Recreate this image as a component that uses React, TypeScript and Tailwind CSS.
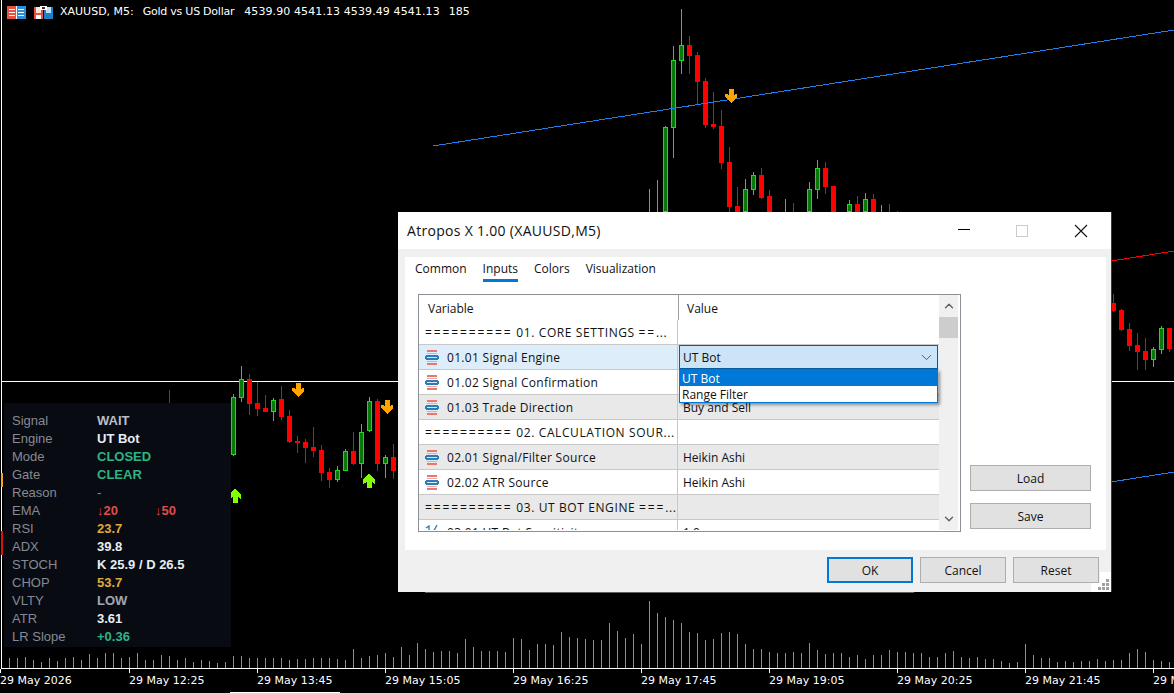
import { ChevronDown, ChevronUp } from 'lucide-react';

const sans = 'font-["Open_Sans",sans-serif]';

// [x, wickTop, wickBottom, bodyTop, bodyBottom, up]
type Candle = [number, number, number, number, number, boolean];

const candles: Candle[] = [
  [233, 394, 456, 397, 455, true],
  [241, 366, 402, 379, 398, true],
  [249, 374, 415, 379, 404, false],
  [257, 382, 416, 403, 409, false],
  [265, 395, 412, 408, 412, false],
  [273, 398, 421, 400, 412, true],
  [281, 386, 420, 399, 417, false],
  [289, 410, 443, 416, 442, false],
  [297, 436, 453, 441, 443, false],
  [305, 439, 463, 442, 448, false],
  [313, 427, 457, 447, 451, false],
  [321, 445, 481, 450, 473, false],
  [329, 468, 488, 472, 480, false],
  [337, 466, 482, 470, 480, true],
  [345, 449, 471, 451, 471, true],
  [353, 432, 465, 451, 464, false],
  [361, 424, 478, 432, 464, true],
  [369, 397, 432, 401, 431, true],
  [377, 399, 471, 401, 464, false],
  [385, 455, 478, 457, 464, true],
  [393, 444, 479, 457, 471, false],
  [665, 126, 212, 127, 212, true],
  [673, 46, 158, 60, 128, true],
  [681, 9, 74, 45, 61, true],
  [689, 36, 74, 45, 56, false],
  [697, 52, 104, 55, 82, false],
  [705, 78, 128, 81, 125, false],
  [713, 92, 129, 124, 127, false],
  [721, 110, 169, 126, 163, false],
  [729, 147, 212, 162, 207, false],
  [737, 187, 212, 206, 212, false],
  [745, 179, 212, 189, 212, true],
  [753, 172, 195, 175, 190, true],
  [761, 168, 199, 175, 198, false],
  [769, 190, 212, 196, 212, false],
  [809, 182, 212, 189, 212, true],
  [817, 160, 199, 168, 190, true],
  [825, 162, 194, 168, 187, false],
  [833, 186, 212, 186, 212, false],
  [849, 200, 212, 204, 212, true],
  [857, 196, 212, 204, 212, false],
  [865, 193, 212, 199, 212, true],
  [873, 194, 212, 199, 212, false],
  [1113, 294, 312, 303, 311, false],
  [1121, 309, 331, 310, 330, false],
  [1129, 323, 351, 329, 346, false],
  [1137, 333, 370, 345, 352, false],
  [1145, 338, 370, 351, 360, false],
  [1153, 347, 367, 349, 360, true],
  [1161, 326, 354, 328, 350, true],
  [1169, 328, 352, 328, 349, false],
];

// lone wicks poking out above the dialog or the panel
const wicks: [number, number, number, string][] = [
  [649, 189, 212, '#14e014'],
  [657, 180, 212, '#14e014'],
  [785, 199, 212, '#14e014'],
  [793, 203, 212, '#ff0000'],
  [881, 205, 212, '#14e014'],
  [889, 204, 212, '#ff0000'],
  [897, 211, 212, '#ff0000'],
  [169, 390, 403, '#ff0000'],
];

const volumes = [
  10, 10, 11, 8, 6, 10, 7, 10, 11, 8, 14, 10, 15, 15, 10, 11, 15, 8, 8, 13, 12, 8, 10, 6, 8, 7, 5, 6, 12, 12, 10, 10, 10,
  10, 10, 8, 9, 9, 10, 10, 10, 9, 8, 19, 10, 12, 13, 15, 11, 21, 13, 25, 19, 16, 17, 17, 15, 29, 21, 17, 17, 17, 16, 30,
  29, 18, 24, 24, 23, 36, 31, 30, 29, 28, 28, 45, 37, 30, 34, 24, 67, 55, 51, 48, 45, 36, 35, 28, 29, 35, 36, 34, 24, 19,
  19, 16, 15, 15, 16, 15, 25, 18, 14, 15, 15, 11, 13, 9, 13, 13, 18, 16, 16, 15, 15, 11, 11, 15, 17, 11, 10, 11, 9, 9, 7,
  5, 6, 24, 13, 10, 10, 6, 7, 6, 7, 7, 9, 7, 8, 8, 15, 19, 16, 8, 7, 6,
];

const timeLabels = [
  '29 May 2026',
  '29 May 12:25',
  '29 May 13:45',
  '29 May 15:05',
  '29 May 16:25',
  '29 May 17:45',
  '29 May 19:05',
  '29 May 20:25',
  '29 May 21:45',
  '29 May 23:05',
];

function DownArrow({ x, y }: { x: number; y: number }) {
  return (
    <polygon
      transform={`translate(${x} ${y})`}
      points="-2.5,0 2.5,0 2.5,6 5.5,4.5 6,8 0,14 -6,8 -5.5,4.5 -2.5,6"
      fill="#ffa500"
    />
  );
}

function UpArrow({ x, y }: { x: number; y: number }) {
  return (
    <polygon
      transform={`translate(${x} ${y})`}
      points="-2.5,15 2.5,15 2.5,9 5.5,10.5 6,7 0,0 -6,7 -5.5,10.5 -2.5,9"
      fill="#7fff00"
    />
  );
}

function ChartDrawing() {
  return (
    <svg className="absolute inset-0" width={1174} height={669} shapeRendering="crispEdges">
      <rect x={1} y={0} width={1} height={669} fill="#ffffff" />
      <rect x={1} y={473} width={2} height={14} fill="#f5a623" />
      <rect x={1} y={531} width={2} height={24} fill="#e01010" />
      <rect x={2} y={381} width={1172} height={1} fill="#ffffff" />
      <rect x={1} y={668} width={1173} height={1} fill="#ffffff" />
      {volumes.map((h, i) => (
        <rect key={i} x={9 + i * 8} y={668 - h} width={1} height={h} fill="#32cd32" />
      ))}
      {wicks.map(([x, a, b, c]) => (
        <rect key={x} x={x} y={a} width={1} height={b - a} fill={c} />
      ))}
      {candles.map(([x, wt, wb, bt, bb, up]) => (
        <g key={x}>
          <rect x={x} y={wt} width={1} height={wb - wt} fill={up ? '#14e014' : '#ff0000'} />
          {up ? (
            <rect x={x - 1.5} y={bt + 0.5} width={4} height={bb - bt - 1} fill="#067a06" stroke="#14e014" />
          ) : (
            <rect x={x - 2} y={bt} width={5} height={bb - bt} fill="#ff0000" />
          )}
        </g>
      ))}
      <line x1={433} y1={146} x2={1174} y2={30} stroke="#1e80f0" />
      <line x1={1111} y1={261} x2={1174} y2={251} stroke="#ff0000" />
      <line x1={1111} y1={482} x2={1174} y2={472} stroke="#1e80f0" />
      <DownArrow x={298} y={383} />
      <DownArrow x={387} y={400} />
      <DownArrow x={731} y={89} />
      <UpArrow x={369} y={473} />
      <UpArrow x={235} y={488} />
    </svg>
  );
}

function ChartHeader() {
  return (
    <div className='absolute left-[7px] top-[4px] flex items-center font-["DejaVu_Sans",sans-serif] text-[11px] whitespace-pre text-white'>
      <svg width={19} height={13} viewBox="0 0 19 13" shapeRendering="crispEdges">
        <rect width={19} height={13} fill="#ffffff" />
        <rect x={0} y={0} width={9} height={13} fill="#e8503f" />
        <rect x={10} y={0} width={9} height={13} fill="#2c8fd8" />
        <rect x={2} y={3} width={6} height={1} fill="#ffffff" />
        <rect x={2} y={6} width={6} height={1} fill="#ffffff" />
        <rect x={2} y={9} width={6} height={1} fill="#ffffff" />
        <rect x={11} y={3} width={6} height={1} fill="#ffffff" />
        <rect x={11} y={6} width={6} height={1} fill="#ffffff" />
        <rect x={11} y={9} width={6} height={1} fill="#ffffff" />
      </svg>
      <svg className="ml-[8px]" width={19} height={13} viewBox="0 0 19 13" shapeRendering="crispEdges">
        <rect x={0} y={1} width={9} height={12} fill="#e8503f" />
        <rect x={2} y={1} width={5} height={6} fill="#fbe3df" />
        <rect x={10} y={1} width={9} height={12} fill="#1f7fc8" />
        <rect x={12} y={1} width={5} height={6} fill="#bfe0f7" />
        <rect x={6} y={0} width={7} height={4} fill="#ffffff" />
        <rect x={8} y={1} width={3} height={2} fill="#333333" />
        <rect x={2} y={9} width={5} height={4} fill="#ffffff" />
      </svg>
      <span className="ml-[7px]">XAUUSD, M5:</span>
      <span className="ml-[9px] tracking-[-0.25px]">Gold vs US Dollar</span>
      <span className="ml-[10px] tracking-[0.1px]">4539.90 4541.13 4539.49 4541.13</span>
      <span className="ml-[9px]">185</span>
    </div>
  );
}

const panelRows = [
  { label: 'Signal', value: 'WAIT', color: 'text-[#b9bdc7]' },
  { label: 'Engine', value: 'UT Bot', color: 'text-[#e8edf4]' },
  { label: 'Mode', value: 'CLOSED', color: 'text-[#2eb384]' },
  { label: 'Gate', value: 'CLEAR', color: 'text-[#2eb384]' },
  { label: 'Reason', value: '-', color: 'text-[#8b8f99] font-normal' },
  { label: 'EMA', value: '', color: '' },
  { label: 'RSI', value: '23.7', color: 'text-[#e0a93b]' },
  { label: 'ADX', value: '39.8', color: 'text-[#e8edf4]' },
  { label: 'STOCH', value: 'K 25.9 / D 26.5', color: 'text-[#e8edf4]' },
  { label: 'CHOP', value: '53.7', color: 'text-[#e0a93b]' },
  { label: 'VLTY', value: 'LOW', color: 'text-[#a3a7b1]' },
  { label: 'ATR', value: '3.61', color: 'text-[#e8edf4]' },
  { label: 'LR Slope', value: '+0.36', color: 'text-[#2eb384]' },
];

function SignalPanel() {
  return (
    <div className='absolute left-[4px] top-[403px] h-[244px] w-[227px] bg-[#080b12] pl-[8px] pt-[9px] font-["Liberation_Sans",sans-serif] text-[13px] leading-[18px]'>
      {panelRows.map((row) => (
        <div key={row.label} className="flex h-[18px]">
          <span className="w-[85px] text-[#868a94]">{row.label}</span>
          {row.label === 'EMA' ? (
            <span className="flex font-bold text-[#e04b4b]">
              <span className="w-[58px]">↓20</span>
              <span>↓50</span>
            </span>
          ) : (
            <span className={`font-bold ${row.color}`}>{row.value}</span>
          )}
        </div>
      ))}
    </div>
  );
}

function ParamIcon() {
  return (
    <svg className="shrink-0" width={15} height={15} viewBox="0 0 15 15" shapeRendering="crispEdges">
      <rect x={2} y={0} width={10} height={2} fill="#e9766f" />
      <rect x={2} y={3} width={10} height={1} fill="#f0a8a3" />
      <rect x={1} y={5} width={12} height={5} fill="#2b7cb8" />
      <rect x={0} y={6} width={14} height={3} fill="#2b7cb8" />
      <rect x={2} y={7} width={10} height={1} fill="#d5e6f3" />
      <rect x={2} y={11} width={10} height={1} fill="#f0a8a3" />
      <rect x={2} y={13} width={10} height={2} fill="#e9766f" />
    </svg>
  );
}

function FractionIcon() {
  return (
    <svg className="shrink-0" width={15} height={15} viewBox="0 0 15 15">
      <path d="M1 3 L4 1 V9 M12 0 L5 13" fill="none" stroke="#2b7cb8" strokeWidth={1.3} />
    </svg>
  );
}

type Row = { kind: 'sep' | 'param' | 'num'; name: string; value: string; bg: string };

const rows: Row[] = [
  { kind: 'sep', name: '========== 01. CORE SETTINGS ==...', value: '', bg: 'bg-white' },
  { kind: 'param', name: '01.01 Signal Engine', value: '', bg: 'bg-[#deedfa]' },
  { kind: 'param', name: '01.02 Signal Confirmation', value: '', bg: 'bg-white' },
  { kind: 'param', name: '01.03 Trade Direction', value: 'Buy and Sell', bg: 'bg-[#e9e9e9]' },
  { kind: 'sep', name: '========== 02. CALCULATION SOUR...', value: '', bg: 'bg-white' },
  { kind: 'param', name: '02.01 Signal/Filter Source', value: 'Heikin Ashi', bg: 'bg-[#e9e9e9]' },
  { kind: 'param', name: '02.02 ATR Source', value: 'Heikin Ashi', bg: 'bg-white' },
  { kind: 'sep', name: '========== 03. UT BOT ENGINE ===...', value: '', bg: 'bg-[#e9e9e9]' },
  { kind: 'num', name: '03.01 UT Bot Sensitivity', value: '1.0', bg: 'bg-white' },
];

// the "=" runs sit wider in the reference than in this font
function SeparatorName({ name }: { name: string }) {
  return (
    <span className="whitespace-pre pt-[2px] tracking-[0.6px]">
      {name.split(/(=+)/).map((part, i) => (
        <span key={i} className={part.startsWith('=') ? 'tracking-[1.9px]' : ''}>
          {part}
        </span>
      ))}
    </span>
  );
}

function TableRow({ row }: { row: Row }) {
  return (
    <div className={`flex h-[25px] shrink-0 border-b border-[#c8c8c8] ${row.bg}`}>
      <div className="flex w-[259px] items-center border-r border-[#c8c8c8] pl-[6px]">
        {row.kind === 'param' && <ParamIcon />}
        {row.kind === 'num' && <FractionIcon />}
        {row.kind === 'sep' ? (
          <SeparatorName name={row.name} />
        ) : (
          <span className="ml-[7px] pt-[2px] tracking-[0.3px]">{row.name}</span>
        )}
      </div>
      <div className="flex-1 pl-[5px] leading-[26px]">{row.value}</div>
    </div>
  );
}

function ValueCombo() {
  return (
    <div className="absolute left-[260px] top-[50px] z-10 w-[259px]">
      <div className="flex h-[24px] items-center justify-between border border-[#0b5c9e] bg-[#cce4f7] pl-[3px] pr-[2px]">
        <span className="pt-[2px]">UT Bot</span>
        <ChevronDown size={17} strokeWidth={1.1} className="text-[#333333]" />
      </div>
      <div className="border border-t-0 border-[#0078d7] bg-white shadow-[2px_2px_3px_rgba(0,0,0,0.4)]">
        <div className="h-[17px] bg-[#0078d7] pl-[2px] leading-[20px] text-white">UT Bot</div>
        <div className="h-[16px] pl-[2px] leading-[17px]">Range Filter</div>
      </div>
    </div>
  );
}

function InputsTable() {
  return (
    <div className="relative flex h-[238px] w-[543px] border border-[#8a9096] bg-white">
      <div className="w-[520px] overflow-hidden">
        <div className="flex h-[25px] leading-[27px]">
          <div className="flex h-[25px] w-[260px] border-r border-[#a0a0a0] pl-[9px]">Variable</div>
          <div className="pl-[8px]">Value</div>
        </div>
        <div className="flex h-[210px] flex-col overflow-hidden">
          {rows.map((row) => (
            <TableRow key={row.name} row={row} />
          ))}
        </div>
      </div>
      <div className="mb-[1px] flex w-[19px] flex-col items-center bg-[#f0f0f0]">
        <div className="flex h-[22px] items-center">
          <ChevronUp size={14} strokeWidth={2.4} className="text-[#606060]" />
        </div>
        <div className="h-[21px] w-full bg-[#cdcdcd]" />
        <div className="mt-auto flex h-[22px] items-center">
          <ChevronDown size={14} strokeWidth={2.4} className="text-[#606060]" />
        </div>
      </div>
      <ValueCombo />
    </div>
  );
}

function WinButton({ label, primary, wide }: { label: string; primary?: boolean; wide?: boolean }) {
  return (
    <div
      className={`flex items-center justify-center bg-[#e1e1e1] ${
        primary ? 'border-2 border-[#0078d7]' : 'border border-[#adadad]'
      } ${wide ? 'h-[26px] w-[121px]' : 'h-[26px] w-[86px]'}`}
    >
      <span className="pt-[2px]">{label}</span>
    </div>
  );
}

function SettingsDialog() {
  return (
    <div className={`absolute left-[398px] top-[212px] flex h-[380px] w-[713px] flex-col bg-[#f0f0f0] text-xs text-[#111111] ${sans}`}>
      <div className="absolute left-full top-0 h-full w-[1px] bg-[#3c3c3c]" />
      <div className="absolute left-[27px] top-full h-[1px] w-[489px] bg-[#606060]" />
      <div className="flex h-[37px] shrink-0 items-center justify-between bg-white pl-[9px]">
        <span className="pt-[2px] text-[14px] tracking-[0.3px]">Atropos X 1.00 (XAUUSD,M5)</span>
        <div className="flex items-center">
          <svg width={60} height={14} viewBox="0 0 60 14" shapeRendering="crispEdges">
            <rect x={3} y={5} width={12} height={1} fill="#000000" />
          </svg>
          <svg width={59} height={14} viewBox="0 0 59 14" shapeRendering="crispEdges">
            <rect x={1.5} y={1.5} width={11} height={11} fill="none" stroke="#cccccc" />
          </svg>
          <svg className="mr-[23px]" width={14} height={14} viewBox="0 0 14 14">
            <path d="M1 1 L13 13 M13 1 L1 13" stroke="#111111" strokeWidth={1.1} />
          </svg>
        </div>
      </div>
      <div className="ml-[7px] mr-[5px] mt-[8px] h-[293px] bg-white">
        <div className="flex gap-[16px] pl-[10px] pt-[2px]">
          <span className="h-[23px] leading-[19px]">Common</span>
          <span className="h-[23px] border-b-[3px] border-[#0078d7] leading-[19px]">Inputs</span>
          <span className="h-[23px] leading-[19px]">Colors</span>
          <span className="h-[23px] leading-[19px]">Visualization</span>
        </div>
        <div className="mt-[12px] flex pl-[13px]">
          <InputsTable />
          <div className="ml-[9px] flex flex-col gap-[12px] pt-[171px]">
            <WinButton label="Load" wide />
            <WinButton label="Save" wide />
          </div>
        </div>
      </div>
      <div className="mt-[7px] flex justify-end gap-[7px] pr-[12px]">
        <WinButton label="OK" primary />
        <WinButton label="Cancel" />
        <WinButton label="Reset" />
      </div>
      <svg className="absolute bottom-0 right-0" width={20} height={30} viewBox="0 0 20 30" shapeRendering="crispEdges">
        <rect x={0} y={21} width={20} height={9} fill="#ffffff" />
        <rect x={9} y={10} width={11} height={11} fill="#ffffff" />
        <rect x={15} y={17} width={3} height={3} fill="#a0a0a0" />
        <rect x={11} y={21} width={3} height={3} fill="#a0a0a0" />
        <rect x={15} y={21} width={3} height={3} fill="#a0a0a0" />
        <rect x={7} y={25} width={3} height={3} fill="#a0a0a0" />
        <rect x={11} y={25} width={3} height={3} fill="#a0a0a0" />
        <rect x={15} y={25} width={3} height={3} fill="#a0a0a0" />
      </svg>
    </div>
  );
}

export default function App() {
  return (
    <div className="flex h-[694px] w-[1174px] flex-col overflow-hidden bg-black">
      <div className="relative h-[669px] shrink-0">
        <ChartDrawing />
        <ChartHeader />
        <SignalPanel />
        <SettingsDialog />
      </div>
      <div className='relative flex h-[24px] shrink-0 font-["DejaVu_Sans",sans-serif] text-[11px] text-white'>
        {timeLabels.map((t, i) => (
          <div key={t} className={`relative h-full shrink-0 pt-[4px] ${i === 0 ? 'w-[129px]' : 'w-[128px]'}`}>
            <div className="absolute left-0 top-0 h-[4px] w-[1px] bg-white" />
            <span className="whitespace-nowrap">{t}</span>
          </div>
        ))}
        <div className="absolute bottom-0 left-[230px] h-[1px] w-[110px] bg-white" />
      </div>
      <div className="h-[1px] shrink-0 bg-[#dcdcdc]" />
    </div>
  );
}
